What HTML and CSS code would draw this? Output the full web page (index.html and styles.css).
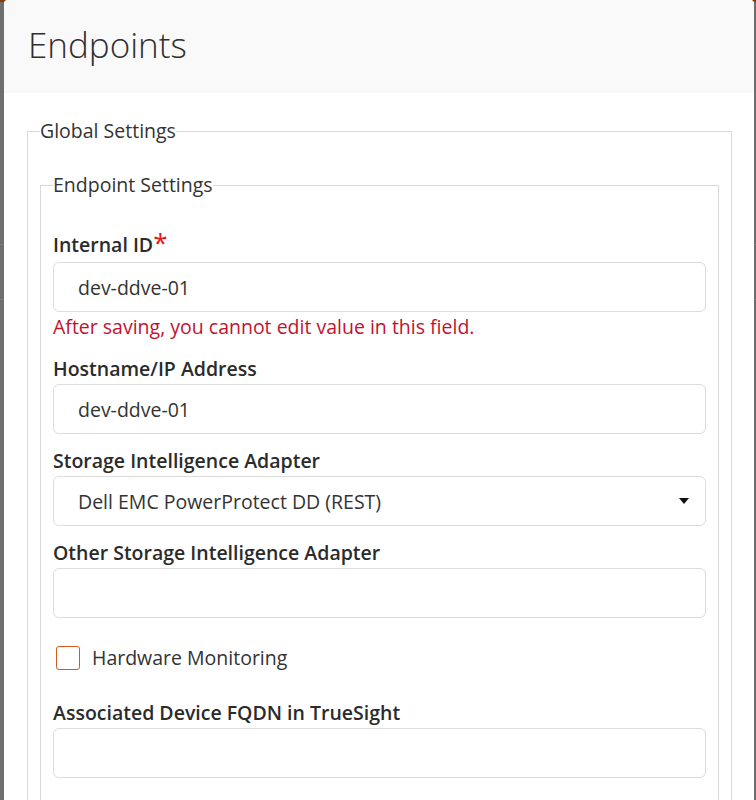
FILE: index.html
```html
<!DOCTYPE html>
<html lang="en">
<head>
<meta charset="utf-8">
<title>Endpoints</title>
<link rel="stylesheet" href="styles.css">
</head>
<body>
<div class="modal">
  <div class="modal-header">
    <h1 class="modal-title">Endpoints</h1>
  </div>
  <div class="modal-body">
    <fieldset class="fs fs-outer">
      <legend class="fs-legend">Global Settings</legend>
      <fieldset class="fs fs-inner">
        <legend class="fs-legend">Endpoint Settings</legend>

        <div class="group group-first">
          <label class="lbl lbl-req">Internal ID<span class="req">*</span></label>
          <div class="field">dev-ddve-01</div>
          <div class="error">After saving, you cannot edit value in this field.</div>
        </div>

        <div class="group">
          <label class="lbl">Hostname/IP Address</label>
          <div class="field">dev-ddve-01</div>
        </div>

        <div class="group">
          <label class="lbl">Storage Intelligence Adapter</label>
          <div class="field field-select">
            <span>Dell EMC PowerProtect DD (REST)</span>
            <span class="caret"></span>
          </div>
        </div>

        <div class="group">
          <label class="lbl">Other Storage Intelligence Adapter</label>
          <div class="field"></div>
        </div>

        <div class="check-row">
          <span class="checkbox"></span>
          <span class="check-label">Hardware Monitoring</span>
        </div>

        <div class="group">
          <label class="lbl">Associated Device FQDN in TrueSight</label>
          <div class="field"></div>
        </div>
      </fieldset>
    </fieldset>
  </div>
</div>
</body>
</html>
```

FILE: styles.css
```css
html, body {
  margin: 0;
  padding: 0;
}

body {
  width: 756px;
  height: 800px;
  overflow: hidden;
  background:
    linear-gradient(#8a3c00 0, #8a3c00 2px, transparent 2px),
    linear-gradient(transparent 244px, #7b7b7b 244px, #7b7b7b 245px, transparent 245px,
                    transparent 299px, #7b7b7b 299px, #7b7b7b 300px, transparent 300px),
    #6e6e6e;
  font-family: "Open Sans", "Noto Sans", sans-serif;
  color: #333;
}

.modal {
  margin-left: 4px;
  width: 750px;
  height: 800px;
  background: #fff;
  border-radius: 4px 4px 0 0;
  overflow: hidden;
}

.modal-header {
  height: 93px;
  box-sizing: border-box;
  background: #f9f9f9;
  padding: 21px 0 0 24px;
}

.modal-title {
  margin: 0;
  font-weight: 300;
  font-size: 35px;
  line-height: 48px;
  color: #2f2f2f;
}

.modal-body {
  padding: 26px 22px 0 23px;
}

.fs {
  margin: 0;
  border: 1px solid #d9d9d9;
  min-width: 0;
}

.fs-outer {
  padding: 30px 12px 0 12px;
}

.fs-inner {
  padding: 36px 12px 20px 12px;
}

.fs-legend {
  padding: 0;
  font-size: 19.5px;
  line-height: 24px;
  color: #333;
}

.group {
  margin-bottom: 15px;
}

.lbl {
  display: block;
  font-size: 19.5px;
  line-height: 24px;
  font-weight: 600;
  color: #2b2b2b;
  margin-bottom: 3px;
}

.lbl-req {
  margin-bottom: 5px;
}

.req {
  color: #ee1111;
  font-size: 26px;
  line-height: 0;
  font-weight: 400;
}

.field {
  height: 50px;
  box-sizing: border-box;
  border: 1px solid #dcdcdc;
  border-radius: 6px;
  padding: 0 24px;
  display: flex;
  align-items: center;
  font-size: 19.5px;
  color: #333;
  background: #fff;
}

.field-select {
  justify-content: space-between;
  padding-right: 16px;
}

.caret {
  width: 0;
  height: 0;
  border-left: 5px solid transparent;
  border-right: 5px solid transparent;
  border-top: 6px solid #111;
  margin-top: -1px;
}

.error {
  padding-top: 3px;
  padding-bottom: 3px;
  font-size: 19.5px;
  line-height: 24px;
  color: #c1122f;
}

.check-row {
  display: flex;
  align-items: center;
  gap: 12px;
  padding: 13px 0 31px 3px;
}

.checkbox {
  width: 24px;
  height: 24px;
  box-sizing: border-box;
  border: 1.5px solid #cf5c1c;
  border-radius: 3px;
  background: #fff;
}

.check-label {
  font-size: 19.5px;
  line-height: 24px;
  color: #333;
}
```
